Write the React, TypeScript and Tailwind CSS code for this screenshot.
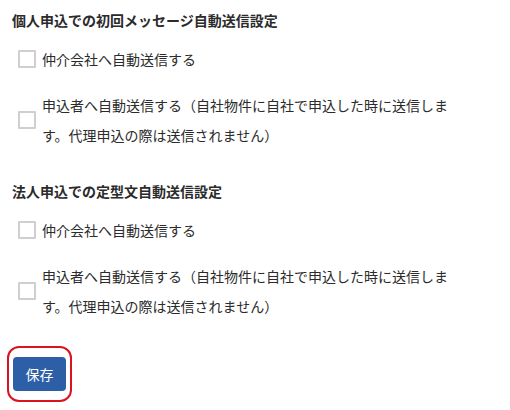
import React from "react";

const font = { fontFamily: '"Noto Sans CJK JP", "Noto Sans", sans-serif' };

function Box() {
  return <span className="block w-[18px] h-[18px] shrink-0 border-2 border-[#cfcfcf] bg-white rounded-[1px]" />;
}

function Section({ title }: { title: string }) {
  return (
    <div>
      <h2 className="text-[14px] leading-[20px] font-bold text-[#2b2b2b]">{title}</h2>
      <div className="pl-[6px] mt-[19px] flex items-center gap-[6px] h-[20px]">
        <Box />
        <span className="text-[14px] leading-[20px] text-[#2b2b2b]">仲介会社へ自動送信する</span>
      </div>
      <div className="pl-[6px] mt-[21px] flex items-center gap-[6px]">
        <Box />
        <span className="text-[14px] leading-[30px] text-[#2b2b2b] w-[412px]">
          申込者へ自動送信する（自社物件に自社で申込した時に送信します。代理申込の際は送信されません）
        </span>
      </div>
    </div>
  );
}

export default function App() {
  return (
    <div className="w-[510px] h-[410px] bg-white pl-[12px] pt-[10px]" style={font}>
      <Section title="個人申込での初回メッセージ自動送信設定" />
      <div className="mt-[31px]">
        <Section title="法人申込での定型文自動送信設定" />
      </div>
      <div className="mt-[25px] -ml-[5px] w-[65px] h-[56px] border-2 border-[#d9131f] rounded-[12px] flex items-center justify-center">
        <button className="w-[53px] h-[34px] bg-[#2c5fa6] rounded-[4px] text-white text-[14px]">保存</button>
      </div>
    </div>
  );
}
